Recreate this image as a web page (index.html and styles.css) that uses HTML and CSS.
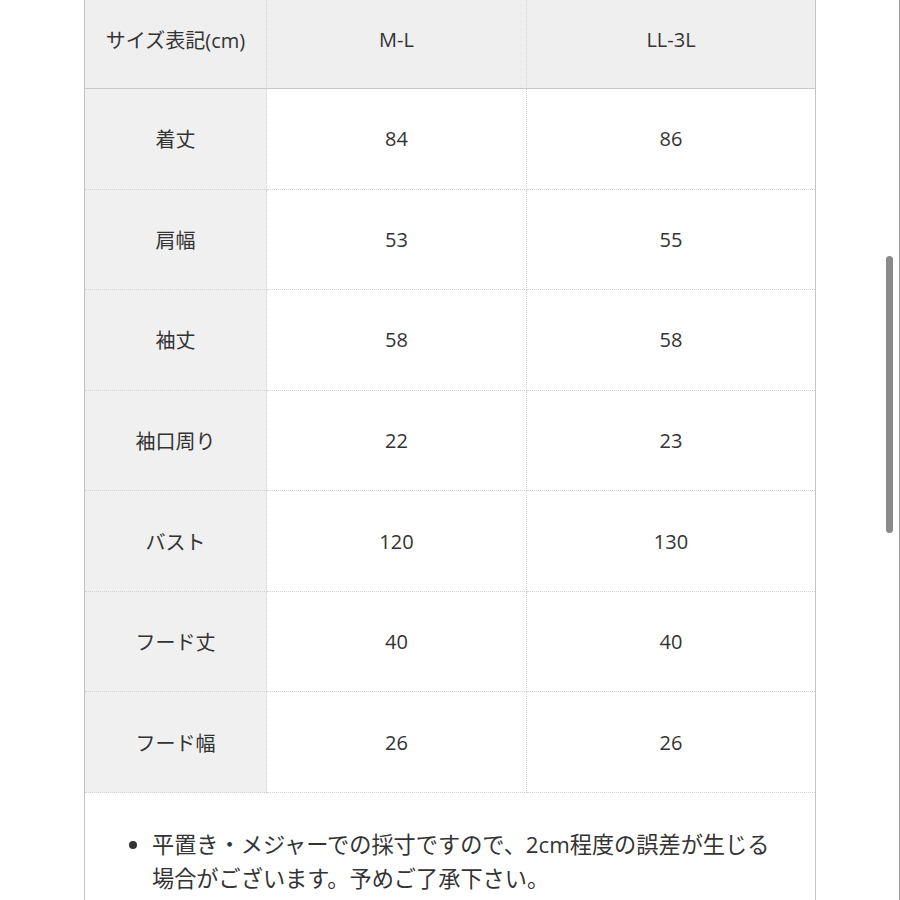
FILE: index.html
```html
<!DOCTYPE html>
<html lang="ja">
<head>
<meta charset="utf-8">
<title>サイズ表</title>
<link rel="stylesheet" href="styles.css">
</head>
<body>
<div class="frame">
  <div class="sheet">
    <div class="grid">
      <div class="cell head label">サイズ表記(cm)</div>
      <div class="cell head">M-L</div>
      <div class="cell head last">LL-3L</div>

      <div class="cell label">着丈</div>
      <div class="cell">84</div>
      <div class="cell last">86</div>

      <div class="cell label">肩幅</div>
      <div class="cell">53</div>
      <div class="cell last">55</div>

      <div class="cell label">袖丈</div>
      <div class="cell">58</div>
      <div class="cell last">58</div>

      <div class="cell label">袖口周り</div>
      <div class="cell">22</div>
      <div class="cell last">23</div>

      <div class="cell label">バスト</div>
      <div class="cell">120</div>
      <div class="cell last">130</div>

      <div class="cell label">フード丈</div>
      <div class="cell">40</div>
      <div class="cell last">40</div>

      <div class="cell label">フード幅</div>
      <div class="cell">26</div>
      <div class="cell last">26</div>
    </div>
    <div class="note">
      <ul class="note-list">
        <li>平置き・メジャーでの採寸ですので、2cm程度の誤差が生じる場合がございます。予めご了承下さい。</li>
      </ul>
    </div>
  </div>
  <div class="scrollbar"></div>
</div>
</body>
</html>
```
FILE: styles.css
```css
html, body {
  margin: 0;
  padding: 0;
  background: #ffffff;
}
body {
  font-family: "Open Sans", "Noto Sans CJK JP", sans-serif;
  color: #333333;
}
.frame {
  position: relative;
  width: 900px;
  height: 900px;
  box-sizing: border-box;
  border-right: 1px solid #9a9a9a;
  overflow: hidden;
}
.sheet {
  margin-left: 84px;
  width: 732px;
  box-sizing: border-box;
  border-left: 1px solid #c4c4c4;
  border-right: 1px solid #c4c4c4;
  min-height: 900px;
}
.grid {
  display: grid;
  grid-template-columns: 182px 260px 288px;
  grid-template-rows: 89px repeat(7, 100.57px);
}
.cell {
  box-sizing: border-box;
  display: flex;
  align-items: center;
  justify-content: center;
  font-size: 20px;
  border-bottom: 1px dotted #d2d2d2;
  border-right: 1px dotted #d2d2d2;
  background: #ffffff;
}
.cell.last {
  border-right: none;
}
.cell.label {
  background: #f0f0f0;
}
.cell.head {
  background: #efefef;
  border-bottom: 1px solid #c8c8c8;
  padding-bottom: 9px;
}
.note {
  padding-top: 35px;
}
.note-list {
  margin: 0;
  padding: 0 0 0 67px;
  width: 628px;
  font-size: 22.2px;
  line-height: 34px;
  color: #333333;
}
.note-list li {
  list-style: disc;
}
.scrollbar {
  position: absolute;
  left: 886px;
  top: 256px;
  width: 7px;
  height: 277px;
  border-radius: 4px;
  background: #8a8a8a;
}
```
